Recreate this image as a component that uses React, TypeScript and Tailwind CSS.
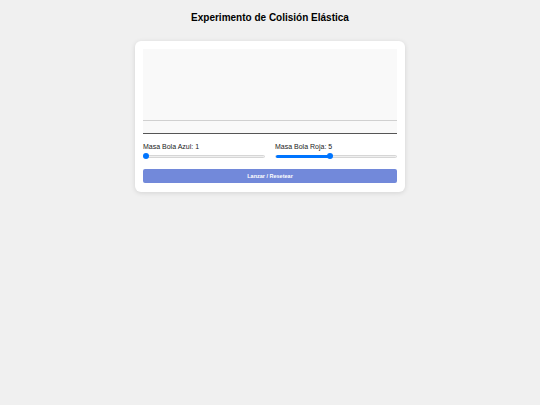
import React from "react";

function Slider({ value, min, max }: { value: number; min: number; max: number }) {
  const pct = ((value - min) / (max - min)) * 100;
  return (
    <div className="relative h-[6px] w-full flex items-center">
      <div className="relative h-[3px] w-full rounded-full bg-[#efefef] border border-[#d6d6d6]">
        <div className="absolute left-0 top-[-1px] h-[3px] rounded-full bg-[#0075ff]" style={{ width: `calc(${pct}% )` }} />
      </div>
      <div
        className="absolute top-0 h-[6px] w-[6px] rounded-full bg-[#0075ff]"
        style={{ left: `calc(${pct}% - ${pct * 0.06}px)` }}
      />
    </div>
  );
}

export default function App() {
  return (
    <div className="min-h-[405px] w-full bg-[#f0f0f0] flex flex-col items-center" style={{ fontFamily: '"Liberation Sans", Arial, sans-serif' }}>
      <h1 className="mt-[11px] text-[10px] font-bold leading-[13px] text-black">Experimento de Colisión Elástica</h1>
      <div className="mt-[17px] w-[270px] rounded-[6px] bg-white px-[8px] pt-[8px] pb-[9px] shadow-[0_1px_5px_rgba(0,0,0,0.12)]">
        <div className="flex h-[85px] w-full flex-col bg-[#f9f9f9] border-b border-[#555]">
          <div className="h-[71px]" />
          <div className="h-px bg-[#d0d0d0]" />
        </div>
        <div className="mt-[8px] grid grid-cols-2 gap-[10px]">
          <div className="flex flex-col">
            <div className="text-[7px] leading-[9px] text-[#222]">Masa Bola Azul: 1</div>
            <div className="mt-[2px]">
              <Slider value={1} min={1} max={10} />
            </div>
          </div>
          <div className="flex flex-col">
            <div className="text-[7px] leading-[9px] text-[#222]">Masa Bola Roja: 5</div>
            <div className="mt-[2px]">
              <Slider value={5} min={1} max={10} />
            </div>
          </div>
        </div>
        <button className="mt-[10px] flex h-[14px] w-full items-center justify-center rounded-[2px] bg-[#7289da] text-[5.5px] font-bold text-white">
          Lanzar / Resetear
        </button>
      </div>
    </div>
  );
}
